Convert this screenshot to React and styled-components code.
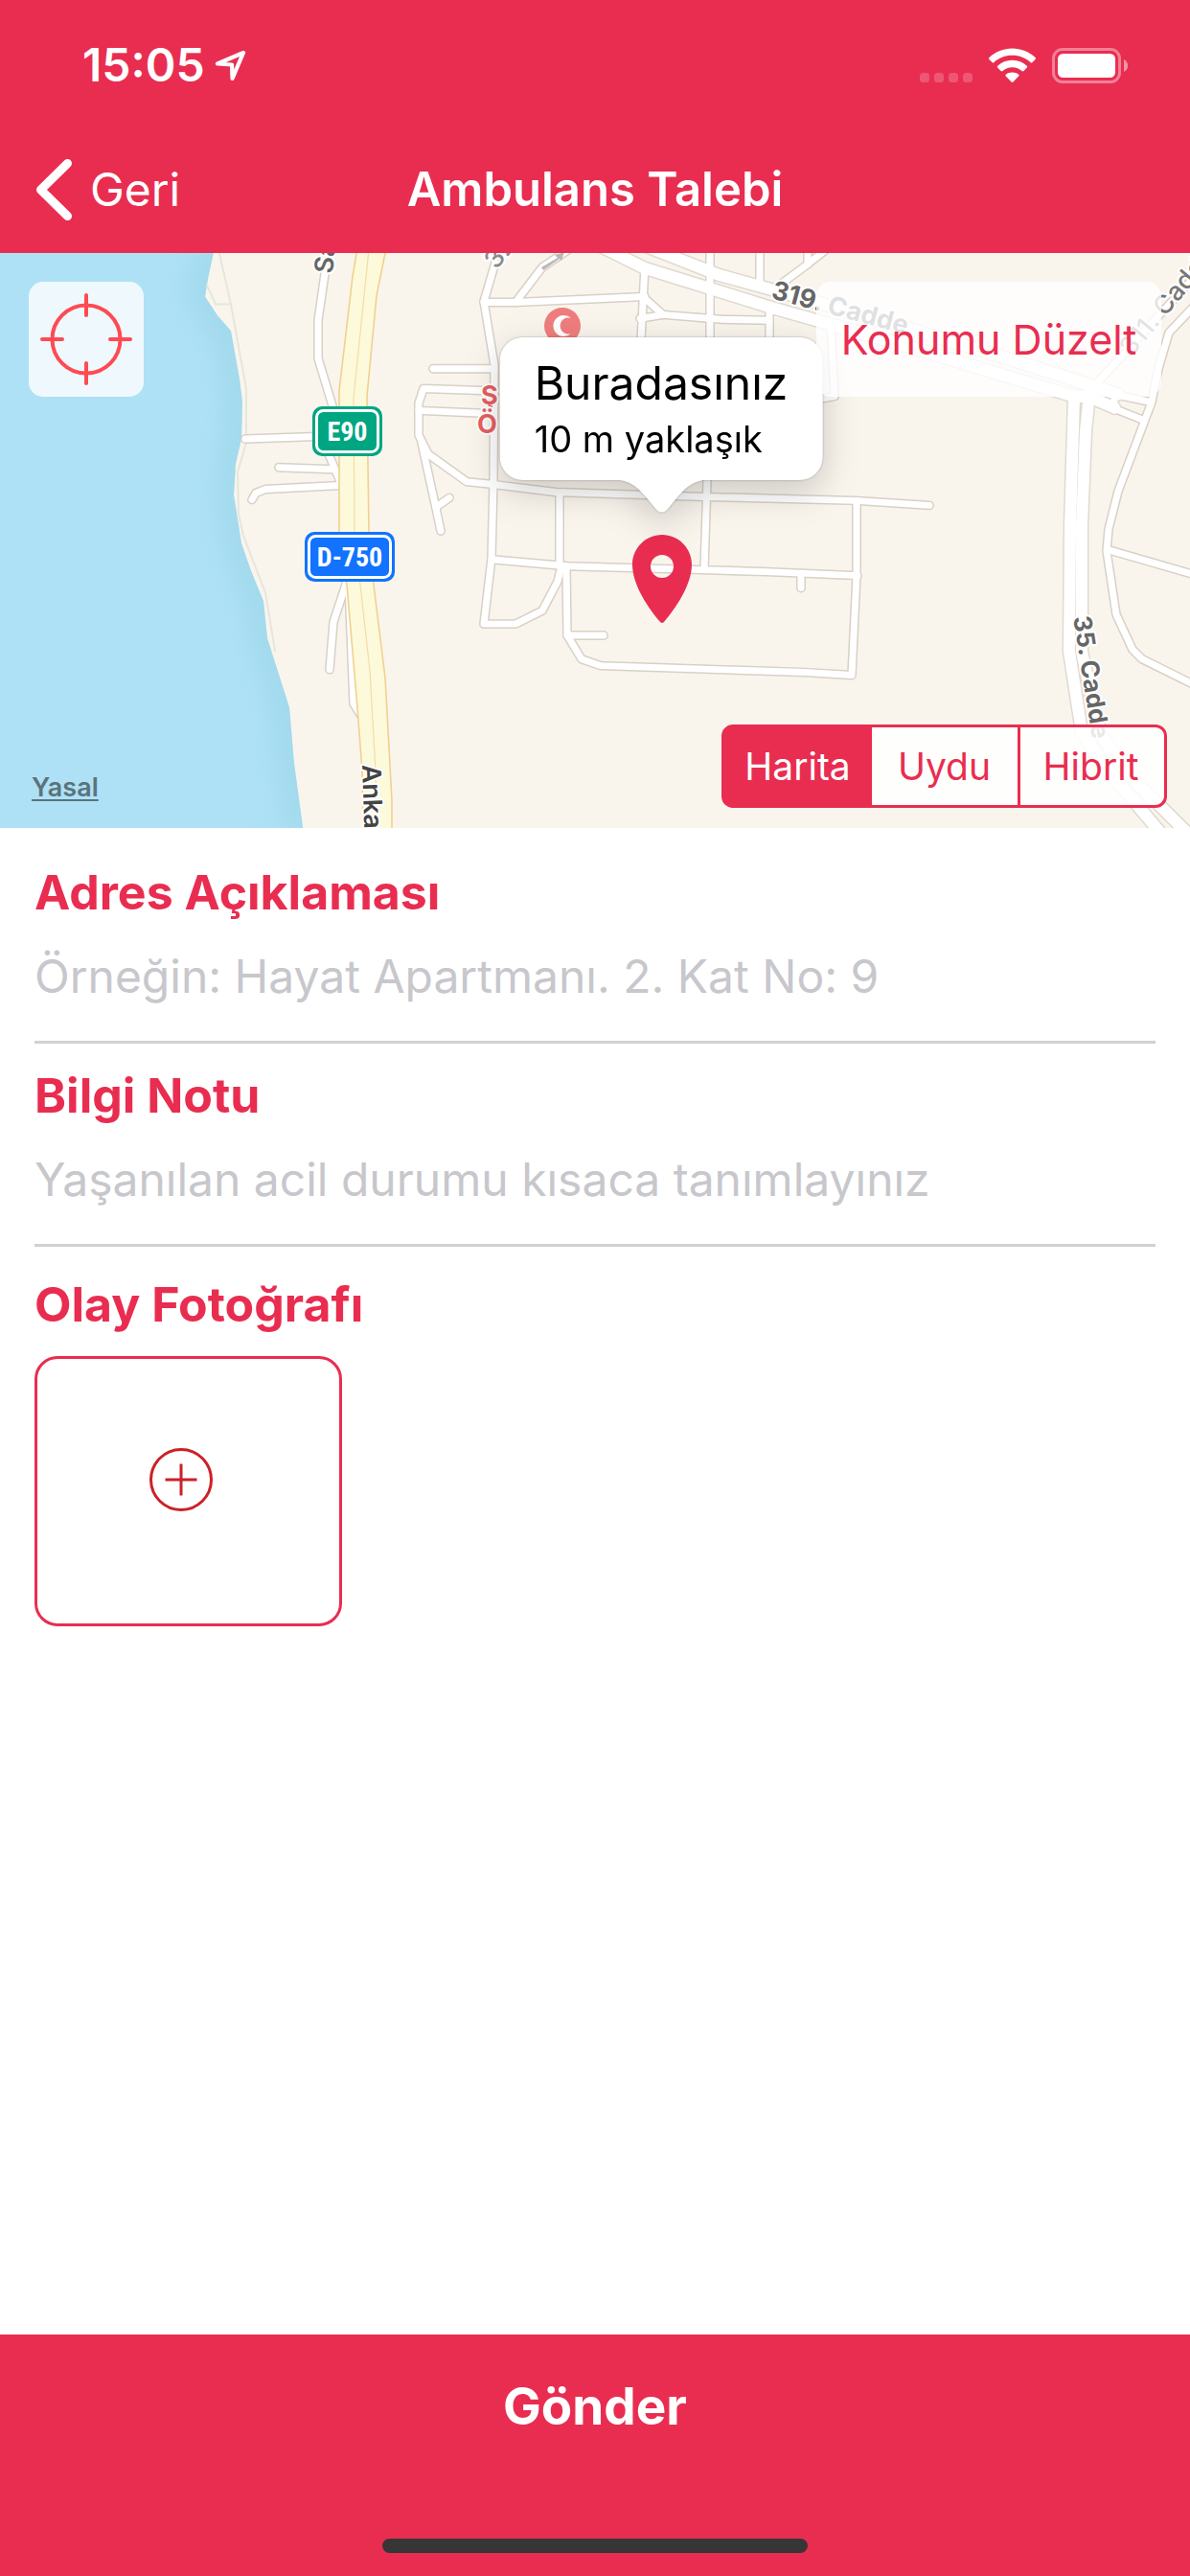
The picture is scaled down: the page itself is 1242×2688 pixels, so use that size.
import React, { useState } from "react";
import styled, { createGlobalStyle, css } from "styled-components";

const RED = "#e92d50";
const FONT = `Inter, "Liberation Sans", sans-serif`;

const GlobalStyle = createGlobalStyle`
  *, *::before, *::after { box-sizing: border-box; }
  body { margin: 0; background: #fff; font-family: ${FONT}; }
  button, input { font-family: inherit; }
`;

const buttonReset = css`
  border: 0;
  margin: 0;
  padding: 0;
  background: none;
  cursor: pointer;
`;

const Page = styled.div`
  min-height: 100vh;
  display: flex;
  flex-direction: column;
`;

const Header = styled.header`
  background: ${RED};
  color: #fff;
`;

const StatusBar = styled.div`
  height: 132px;
  padding: 4px 64px 0 86px;
  display: flex;
  align-items: center;
  justify-content: space-between;
`;

const StatusGroup = styled.div`
  display: flex;
  align-items: center;
  gap: ${(p) => p.$gap}px;
`;

const Clock = styled.time`
  font-size: 48px;
  font-weight: 600;
  line-height: 60px;
`;

const NavBar = styled.nav`
  height: 132px;
  padding: 0 36px;
  display: grid;
  grid-template-columns: 1fr auto 1fr;
  align-items: center;
`;

const BackButton = styled.button`
  ${buttonReset}
  justify-self: start;
  display: flex;
  align-items: center;
  gap: 16px;
  color: #fff;
  font-size: 48px;
  line-height: 60px;
`;

const Title = styled.h1`
  margin: 0;
  font-size: 49px;
  font-weight: 600;
  line-height: 60px;
`;

const MapPanel = styled.section`
  position: relative;
  height: 600px;
  overflow: hidden;
  background: #f9f5ed;
`;

const MapCanvas = styled.svg`
  display: block;
  width: 100%;
  height: 100%;
`;

const MapLabel = styled.text`
  font-family: ${FONT};
  font-size: ${(p) => p.$size || 27}px;
  font-weight: ${(p) => p.$weight || 600};
  fill: ${(p) => p.$color || "#666"};
  stroke: #fff;
  stroke-width: 4px;
  stroke-linejoin: round;
  paint-order: stroke;
`;

const ShieldText = styled.text`
  font-family: "Liberation Sans Narrow", "Roboto Condensed", "Open Sans Condensed", Roboto, sans-serif;
  font-size: 28px;
  font-weight: 700;
  fill: #fff;
  text-anchor: middle;
`;

const Callout = styled.div`
  position: absolute;
  top: 88px;
  left: calc(50% + 69px);
  transform: translateX(-50%);
  padding: 18px 36px 15px;
  border-radius: 24px;
  background: #fff;
  color: #000;
  white-space: nowrap;
  filter: drop-shadow(0 0 1px rgba(0, 0, 0, 0.3)) drop-shadow(0 12px 18px rgba(0, 0, 0, 0.18));
`;

const CalloutTitle = styled.div`
  font-size: 48px;
  line-height: 60px;
`;

const CalloutText = styled.div`
  font-size: 38px;
  line-height: 56px;
`;

const CalloutTail = styled.svg`
  position: absolute;
  top: calc(100% - 1px);
  left: calc(50% - 52px);
`;

const LocateButton = styled.button`
  ${buttonReset}
  position: absolute;
  top: 30px;
  left: 30px;
  width: 120px;
  height: 120px;
  display: grid;
  place-items: center;
  border-radius: 15px;
  background: rgba(255, 255, 255, 0.8);
`;

const FixButton = styled.button`
  ${buttonReset}
  position: absolute;
  top: 30px;
  right: 30px;
  width: 360px;
  height: 120px;
  border-radius: 15px;
  background: rgba(255, 255, 255, 0.8);
  color: ${RED};
  font-size: 43px;
  white-space: nowrap;
`;

const Segments = styled.fieldset`
  position: absolute;
  right: 24px;
  bottom: 21px;
  width: 465px;
  height: 87px;
  margin: 0;
  padding: 0;
  border: 3px solid ${RED};
  border-radius: 12px;
  background: rgba(255, 255, 255, 0.85);
  display: grid;
  grid-template-columns: repeat(3, 1fr);
`;

const Segment = styled.label`
  position: relative;
  display: grid;
  place-items: center;
  border-left: ${(p) => (p.$divided ? `3px solid ${RED}` : "0")};
  color: ${(p) => (p.$active ? "#fff" : RED)};
  background: ${(p) => (p.$active ? RED : "transparent")};
  box-shadow: ${(p) => (p.$active ? `0 0 0 1px ${RED}` : "none")};
  font-size: 39px;
  cursor: pointer;

  &:first-child {
    border-radius: 9px 0 0 9px;
  }

  &:last-child {
    border-radius: 0 9px 9px 0;
  }

  input {
    position: absolute;
    inset: 0;
    margin: 0;
    opacity: 0;
    cursor: pointer;
  }
`;

const SegmentDivider = styled.span`
  position: absolute;
  inset: 0 auto 0 0;
  width: 3px;
  background: ${RED};
`;

const LegalLink = styled.a`
  position: absolute;
  left: 33px;
  bottom: 24px;
  color: #5a737d;
  font-size: 27px;
  font-weight: 600;
  line-height: 36px;
  text-decoration: underline;
  text-decoration-thickness: 2px;
  text-underline-offset: 3px;
  text-decoration-skip-ink: none;
`;

const Form = styled.form`
  flex: 1;
  padding: 37px 36px 24px;
  display: flex;
  flex-direction: column;
  gap: 24px;
`;

const Field = styled.div`
  display: flex;
  flex-direction: column;
`;

const labelText = css`
  margin: 0;
  color: ${RED};
  font-size: 50px;
  font-weight: 700;
  line-height: 60px;
`;

const FieldLabel = styled.label`
  ${labelText}
`;

const TextField = styled.input`
  width: 100%;
  height: 128px;
  padding: 0 0 10px;
  border: 0;
  border-bottom: 3px solid #d1d1d3;
  border-radius: 0;
  outline: 0;
  background: none;
  color: #000;
  font-size: 48px;

  &::placeholder {
    color: #c7c7cc;
    opacity: 1;
  }
`;

const PhotoSection = styled.section`
  padding-top: 6px;
  display: flex;
  flex-direction: column;
  align-items: flex-start;
  gap: 24px;
`;

const PhotoTitle = styled.h2`
  ${labelText}
`;

const AddPhoto = styled.button`
  ${buttonReset}
  width: 321px;
  height: 282px;
  padding: 0 15px 24px 0;
  display: grid;
  place-items: center;
  border: 3px solid ${RED};
  border-radius: 24px;
`;

const Footer = styled.footer`
  min-height: 252px;
  padding-bottom: 24px;
  display: flex;
  flex-direction: column;
  align-items: center;
  justify-content: space-between;
  background: ${RED};
`;

const SendButton = styled.button`
  ${buttonReset}
  width: 100%;
  height: 150px;
  color: #fff;
  font-size: 53px;
  font-weight: 700;
`;

const HomeIndicator = styled.div`
  width: 444px;
  height: 15px;
  border-radius: 8px;
  background: #363636;
`;

const COAST =
  "225,-10 217,27 214,46 227,66 241,82 250,133 253,157 252,196 246,222 244,255 252,306 262,335 275,367 279,406 302,479 307,538 317,612";

const PATHS = [
  "228,-4 241,54 257,143 257,200 248,231 249,275 254,298 277,358 287,419",
  "216,34 225,54 241,54",
];

const STREETS = [
  "340,15 332,71 332,111 347,161 343,212 356,243",
  "256,196 345,193",
  "291,226 348,228",
  "263,260 267,253 277,249 355,245",
  "362,346 348,389 344,439",
  "364,350 369,475 379,491",
  "517,10 505,51 516,118 515,243 513,322 505,391 538,391 566,377 582,346 586,330",
  "505,52 538,52 673,46",
  "538,52 566,15 600,-8",
  "452,122 516,122",
  "503,145 442,143 437,158 437,192 447,212 487,241 515,244 580,252 737,257 893,261 970,266",
  "437,166 505,169",
  "440,200 455,269 460,293",
  "455,268 469,258",
  "584,253 584,330",
  "513,323 592,330 733,334 800,336 895,340",
  "591,330 592,403 607,428 627,435 840,442 889,445 894,340 894,262",
  "592,403 630,403",
  "741,-5 741,95 738,239 735,334",
  "836,338 836,353",
  "673,14 669,92",
  "672,47 692,65",
  "668,69 692,65 753,70 803,71",
  "803,60 803,92",
  "793,-5 793,33",
  "864,-5 840,14 812,35",
  "843,-5 843,12",
  "867,75 871,151 856,154",
  "1250,52 1220,84 1209,122 1202,157 1167,251 1157,291 1155,314 1165,381 1182,418 1192,428 1250,457",
  "1157,313 1250,340",
  "1143,139 1177,102 1242,30",
];

const AVENUES = [
  "672,-8 750,23 800,37 950,80 1067,116 1137,139 1167,149",
  "625,-8 673,16 740,37 800,56 950,99 1067,135 1117,150 1140,153 1163,163",
  "1121,152 1117,287 1116,420 1129,505 1152,540 1212,612",
  "1137,148 1133,188 1129,287 1129,420 1139,467 1149,507 1174,546 1240,612",
];

const CONNECTORS = ["1163,149 1200,157", "1158,162 1193,176", "1163,145 1163,166"];

function Roads({ lines, width, color }) {
  return (
    <g fill="none" stroke={color} strokeWidth={width} strokeLinecap="round" strokeLinejoin="round">
      {lines.map((points) => (
        <polyline key={points} points={points} />
      ))}
    </g>
  );
}

function Shield({ x, y, width, color, children }) {
  return (
    <g transform={`translate(${x} ${y})`}>
      <rect width={width} height="52" rx="10" fill={color} />
      <rect x="4.5" y="4.5" width={width - 9} height="43" rx="7" fill={color} stroke="#fff" strokeWidth="3" />
      <ShieldText x={width / 2} y="36">
        {children}
      </ShieldText>
    </g>
  );
}

function CityMap() {
  return (
    <MapCanvas viewBox="0 0 1242 600" preserveAspectRatio="xMidYMid slice" aria-hidden="true">
      <defs>
        <clipPath id="sea">
          <polygon points={`-400,-10 ${COAST} -400,612`} />
        </clipPath>
        <filter id="shore" x="-50%" y="-10%" width="200%" height="120%">
          <feGaussianBlur stdDeviation="15" />
        </filter>
      </defs>
      <rect x="-400" width="2042" height="600" fill="#f9f5ed" />
      <g transform="scale(1 0.99)">
        <g clipPath="url(#sea)">
          <rect x="-400" y="-10" width="800" height="630" fill="#aee1f5" />
          <polyline points={COAST} fill="none" stroke="#9fd7e9" strokeWidth="28" filter="url(#shore)" />
        </g>
        <Roads lines={PATHS} width="2" color="#e6e6dc" />
        <Roads lines={STREETS} width="10" color="#d9d0c6" />
        <Roads lines={CONNECTORS} width="10" color="#d9d0c6" />
        <Roads lines={AVENUES} width="15" color="#e0d9d0" />
        <Roads lines={STREETS} width="7" color="#fff" />
        <Roads lines={CONNECTORS} width="7" color="#fff" />
        <Roads lines={AVENUES} width="12" color="#fff" />
        <polygon
          points="373,-5 368,25 354,145 354,295 362,350 373,479 378,546 379,615 409,615 409,577 402,448 390,350 385,295 383,151 393,45 403,-5"
          fill="#fcfadb"
          stroke="#f3d08d"
          strokeWidth="1.6"
        />
        <polyline
          points="385,-4 369,153 370,295 376,350 386,440 392,546 394,612"
          fill="none"
          stroke="#f5dca6"
          strokeWidth="1.2"
        />
      </g>
      <path d="M565 15 L582 5 L579 2 L589 -1 L586 8 L584 6 L567 18 Z" fill="#b8b8b8" />
      <MapLabel transform="translate(347 22) rotate(-84)">Sa</MapLabel>
      <MapLabel transform="translate(378 534) rotate(88)" $color="#444">
        Anka
      </MapLabel>
      <MapLabel transform="translate(518 18) rotate(-50)" $color="#8a8a8a" $weight="500">
        32
      </MapLabel>
      <MapLabel transform="translate(804 47) rotate(15)" $weight="700">
        319. Cadde
      </MapLabel>
      <MapLabel transform="translate(1120 380) rotate(81)" $size="26" $weight="700">
        35. Cadde
      </MapLabel>
      <MapLabel transform="translate(1181 109) rotate(-50)" $color="#777" $weight="500">
        311. Cadde
      </MapLabel>
      <circle cx="587" cy="76" r="19" fill="#f07d7d" />
      <path d="M596 68 A11 11 0 1 0 596 84 A8.5 8.5 0 1 1 596 68 Z" fill="#fff" />
      <MapLabel x="502" y="158" $color="#e85f60" $weight="700">
        Ş
      </MapLabel>
      <MapLabel x="498" y="188" $color="#e85f60" $weight="700">
        Ö
      </MapLabel>
      <Shield x={326} y={160} width={73} color="#00a582">
        E90
      </Shield>
      <Shield x={318} y={291} width={94} color="#1173ff">
        D-750
      </Shield>
      <path
        fillRule="evenodd"
        fill={RED}
        d="M691 294 C708 294 722 308 722 325 C722 343 710 365 693 385 Q691 387 689 385 C672 365 660 343 660 325 C660 308 674 294 691 294 Z M691 315 A12 12 0 1 0 691 339 A12 12 0 1 0 691 315 Z"
      />
    </MapCanvas>
  );
}

const MAP_TYPES = ["Harita", "Uydu", "Hibrit"];

export default function App() {
  const [mapType, setMapType] = useState("Harita");
  const activeIndex = MAP_TYPES.indexOf(mapType);

  return (
    <Page>
      <GlobalStyle />
      <Header>
        <StatusBar>
          <StatusGroup $gap={10}>
            <Clock>15:05</Clock>
            <svg width="34" height="34" viewBox="0 0 34 34" aria-hidden="true">
              <path
                d="M30 4 L3 15.5 L18 16.5 L18.5 31 Z"
                fill="none"
                stroke="#fff"
                strokeWidth="4.2"
                strokeLinejoin="round"
              />
            </svg>
          </StatusGroup>
          <StatusGroup $gap={17}>
            <svg width="55" height="37" viewBox="0 0 55 37" aria-hidden="true">
              {[0, 15, 30, 45].map((x) => (
                <rect key={x} x={x} y="26" width="10" height="10" rx="3.5" fill="#fff" fillOpacity="0.2" />
              ))}
            </svg>
            <svg width="49" height="37" viewBox="0 0 49 37" fill="#fff" aria-hidden="true">
              <path d="M24.5 0.5 C33.5 0.5 42 4 48.5 10 Q49.5 11 48.5 12 L45.5 15 Q44.5 16 43.5 15 C38.5 10.5 32 7.8 24.5 7.8 C17 7.8 10.5 10.5 5.5 15 Q4.5 16 3.5 15 L0.5 12 Q-0.5 11 0.5 10 C7 4 15.5 0.5 24.5 0.5 Z" />
              <path d="M24.5 12.8 C30.5 12.8 35.8 15 39.8 18.8 Q40.6 19.7 39.8 20.6 L36.5 24 Q35.5 24.8 34.5 24 C31.8 21.6 28.5 20.2 24.5 20.2 C20.5 20.2 17.2 21.6 14.5 24 Q13.5 24.8 12.5 24 L9.2 20.6 Q8.4 19.7 9.2 18.8 C13.2 15 18.5 12.8 24.5 12.8 Z" />
              <path d="M24.5 25.5 C27.2 25.5 29.5 26.4 31.2 27.8 Q32 28.7 31.2 29.6 L25.4 35.6 Q24.5 36.4 23.6 35.6 L17.8 29.6 Q17 28.7 17.8 27.8 C19.5 26.4 21.8 25.5 24.5 25.5 Z" />
            </svg>
            <svg width="80" height="37" viewBox="0 0 80 37" aria-hidden="true">
              <rect x="1.5" y="1.5" width="58" height="34" rx="9.5" fill="none" stroke="none" />
              <rect x="1.5" y="1.5" width="69" height="34" rx="9.5" fill="none" stroke="#fff" strokeOpacity="0.4" strokeWidth="3" />
              <rect x="6" y="6" width="60" height="25" rx="5.5" fill="#fff" />
              <path d="M75 12 Q79 14 79 18.5 Q79 23 75 25 Z" fill="#fff" fillOpacity="0.5" />
            </svg>
          </StatusGroup>
        </StatusBar>
        <NavBar>
          <BackButton type="button">
            <svg width="42" height="66" viewBox="0 0 42 66" aria-hidden="true">
              <path
                d="M34.5 5.5 L6.5 33 L34.5 60.5"
                fill="none"
                stroke="#fff"
                strokeWidth="9"
                strokeLinecap="round"
                strokeLinejoin="round"
              />
            </svg>
            Geri
          </BackButton>
          <Title>Ambulans Talebi</Title>
        </NavBar>
      </Header>

      <MapPanel aria-label="Harita">
        <CityMap />
        <Callout>
          <CalloutTitle>Buradasınız</CalloutTitle>
          <CalloutText>10 m yaklaşık</CalloutText>
          <CalloutTail width="106" height="37" viewBox="0 0 106 37" aria-hidden="true">
            <path d="M0 0 C22 1 28 8 45 29 Q53 40 61 29 C78 8 84 1 106 0 Z" fill="#fff" />
          </CalloutTail>
        </Callout>
        <LocateButton type="button" aria-label="Konumumu bul">
          <svg width="96" height="96" viewBox="0 0 96 96" fill="none" stroke="#ff4a54" strokeWidth="4" strokeLinecap="round" aria-hidden="true">
            <circle cx="48" cy="48" r="35.5" />
            <path d="M48 2 V23 M48 73 V94 M2 48 H23 M73 48 H94" />
          </svg>
        </LocateButton>
        <FixButton type="button">Konumu Düzelt</FixButton>
        <LegalLink href="#yasal">Yasal</LegalLink>
        <Segments aria-label="Harita türü">
          {MAP_TYPES.map((type, index) => (
            <Segment key={type} $active={index === activeIndex}>
              {index > 0 && index !== activeIndex && index - 1 !== activeIndex && <SegmentDivider />}
              <input
                type="radio"
                name="mapType"
                value={type}
                checked={index === activeIndex}
                onChange={() => setMapType(type)}
              />
              {type}
            </Segment>
          ))}
        </Segments>
      </MapPanel>

      <Form id="request" onSubmit={(e) => e.preventDefault()}>
        <Field>
          <FieldLabel htmlFor="address">Adres Açıklaması</FieldLabel>
          <TextField id="address" type="text" placeholder="Örneğin: Hayat Apartmanı. 2. Kat No: 9" />
        </Field>
        <Field>
          <FieldLabel htmlFor="note">Bilgi Notu</FieldLabel>
          <TextField id="note" type="text" placeholder="Yaşanılan acil durumu kısaca tanımlayınız" />
        </Field>
        <PhotoSection>
          <PhotoTitle>Olay Fotoğrafı</PhotoTitle>
          <AddPhoto type="button" aria-label="Fotoğraf ekle">
            <svg width="66" height="66" viewBox="0 0 66 66" fill="none" stroke="#cb2129" strokeWidth="3" aria-hidden="true">
              <circle cx="33" cy="33" r="31.5" />
              <path d="M33 16.5 V49.5 M16.5 33 H49.5" />
            </svg>
          </AddPhoto>
        </PhotoSection>
      </Form>

      <Footer>
        <SendButton type="submit" form="request">
          Gönder
        </SendButton>
        <HomeIndicator />
      </Footer>
    </Page>
  );
}
